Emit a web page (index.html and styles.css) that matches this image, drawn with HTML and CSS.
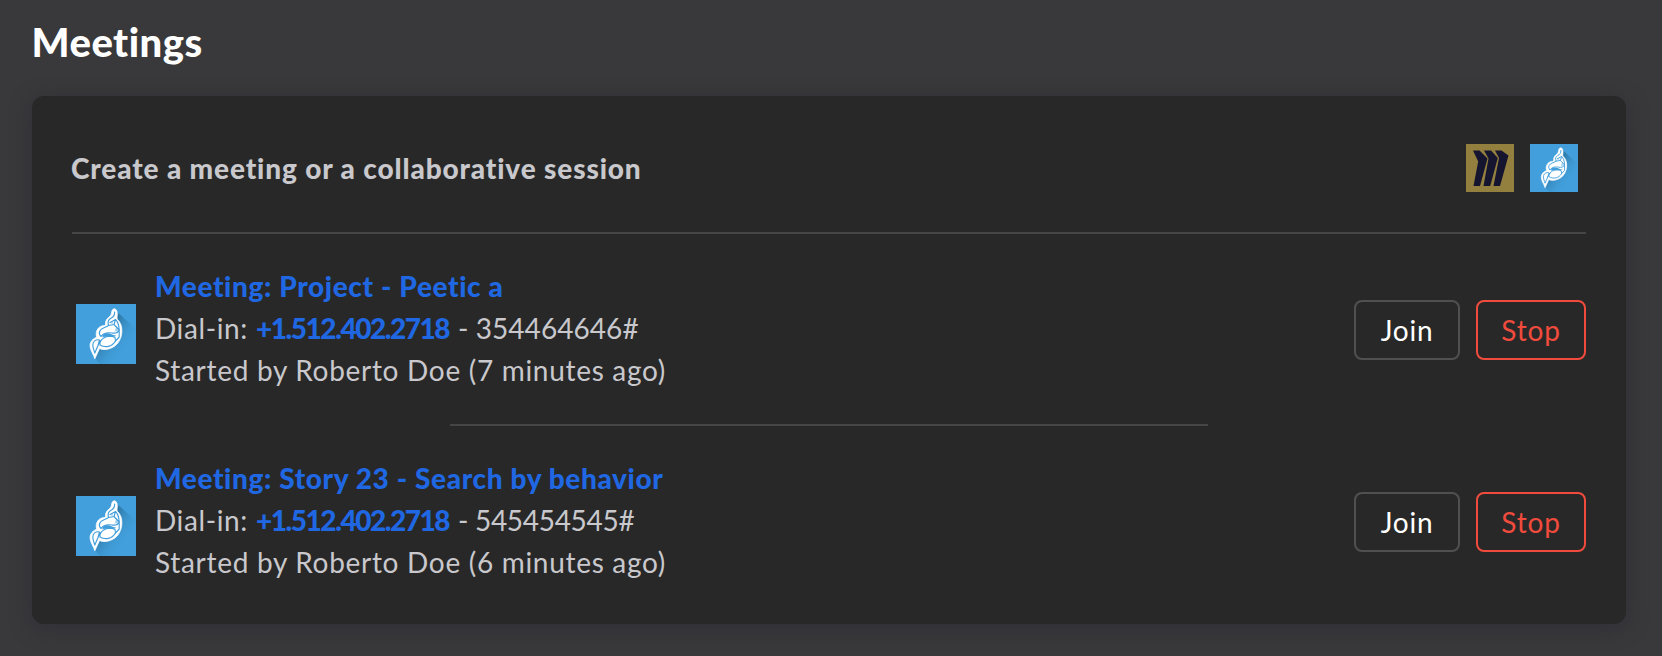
FILE: index.html
```html
<!DOCTYPE html>
<html lang="en">
<head>
<meta charset="utf-8">
<title>Meetings</title>
<link rel="stylesheet" href="styles.css">
</head>
<body>
<svg class="defs" aria-hidden="true">
  <defs>
    <linearGradient id="shade" x1="0.4" y1="0.3" x2="0.8" y2="0.7">
      <stop offset="0" stop-color="#2f7cab"/>
      <stop offset="1" stop-color="#429eda" stop-opacity="0"/>
    </linearGradient>
  </defs>
  <symbol id="jitsi" viewBox="0 0 60 60">
    <rect width="60" height="60" fill="#429fdb"/>
    <path d="M40 7L60 25V60H24L19 54Z" fill="url(#shade)"/>
    <path d="M38.500 4.800C40.500 5 41.500 8 41.300 10.500C41.200 12.500 40.500 14 41.500 15.500C44 18 45.500 21 45.800 25C46.200 30 45 35 41.500 39.500C38 43.500 33 45.500 28 45.500C26 45.500 24.500 45 23.500 44.500C22 48 20.500 51 18.800 54.800C18 51 15 47.500 14.300 43.500C13.500 39.500 15 35.500 20.800 33.200C19.500 30.500 20.200 26.500 22.500 24C24.500 22 27 21.500 29.500 21.500C29.200 18.500 29.800 15.500 32.500 13.500C34.500 12 35.500 10.500 35.700 8C36 6 37 4.800 38.500 4.800Z" fill="#fff" stroke="#fff" stroke-width=".8"/>
    <g fill="none" stroke="#429fdb" stroke-width="1.150" stroke-linecap="round" stroke-linejoin="round">
      <path d="M38.700 8C38.500 12 37.500 13 34.500 14.500C32 16 31.500 18 32.500 21.500L38 20.500L39.500 15.500L34 18.500M39.500 15.500C42 18 43 21 43.200 26L38 20.500"/>
      <path d="M32.500 21.500C29 24 25.500 23.500 23.800 27C23 29 23.500 31 25 32.500C28 28 33 28.500 36 29C39 29.500 42 29 43.200 26V33L39.500 37"/>
      <path d="M23.500 36C20 35 17 37 16.800 41C16.800 44 18 46 18.800 49L22 41.500ZM22 41.500L25 36.500"/>
      <path d="M24 37.500C27 33 33 30.500 39 33.500L39.500 37C36 43 29 44 24 41Z"/>
    </g>
    <path d="M26.500 31C29 28.500 33 29 36 30.500C38 31.500 40 32 41.500 31.500C36 34 31 32 26.500 33.500Z" fill="#429fdb"/>
    <path d="M34 19L37 17.500L36.500 20Z M40.500 22L42.500 27L38.500 27.500Z" fill="#429fdb" opacity=".45"/>
  </symbol>
</svg>
<main class="page">
  <h1 class="page-title">Meetings</h1>
  <section class="card">
    <header class="card-header">
      <h2 class="card-title">Create a meeting or a collaborative session</h2>
      <div class="providers">
        <svg class="provider" viewBox="0 0 48 48" role="img" aria-label="Miro">
          <rect width="48" height="48" fill="#937f3e"/>
          <path d="M7 6.500H13.500L21.500 14.500L14 42H7.500L12.200 17.500ZM18 6.500H25L31.800 14L24.200 42H17.500L22.500 14.500ZM29 6.500H35.500L42.500 11.500L34 42H27.500L33 14Z" fill="#15152f"/>
        </svg>
        <svg class="provider" role="img" aria-label="Jitsi"><use href="#jitsi"/></svg>
      </div>
    </header>
    <ul class="meetings">
      <li class="meeting">
        <svg class="meeting-icon" aria-hidden="true"><use href="#jitsi"/></svg>
        <div class="details">
          <a class="link name">Meeting: Project - Peetic a</a>
          <div class="dial"><span class="label">Dial-in:</span><a class="link phone">+1.512.402.2718</a><span>- 354464646#</span></div>
          <div class="started">Started by Roberto Doe (7 minutes ago)</div>
        </div>
        <div class="actions"><button class="btn join">Join</button><button class="btn stop">Stop</button></div>
      </li>
      <li class="meeting">
        <svg class="meeting-icon" aria-hidden="true"><use href="#jitsi"/></svg>
        <div class="details">
          <a class="link name">Meeting: Story 23 - Search by behavior</a>
          <div class="dial"><span class="label">Dial-in:</span><a class="link phone">+1.512.402.2718</a><span class="pin-narrow">- 545454545#</span></div>
          <div class="started">Started by Roberto Doe (6 minutes ago)</div>
        </div>
        <div class="actions"><button class="btn join">Join</button><button class="btn stop">Stop</button></div>
      </li>
    </ul>
  </section>
</main>
</body>
</html>
```
FILE: styles.css
```css
* { box-sizing: border-box; }
body { margin: 0; background: #39393b; color: #c9c8cd; font: 28px/42px Lato, "Liberation Sans", sans-serif; font-variant-ligatures: none; }
.defs { position: absolute; width: 0; height: 0; }
.page { padding: 16px 36px 32px 32px; }
.page-title { margin: 0 0 28px; color: #fff; font-size: 40px; line-height: 52px; font-weight: 900; letter-spacing: .5px; text-indent: -.5px; }
.card { height: 528px; padding: 0 40px; border-radius: 12px; background: #282828; box-shadow: 0 4px 20px rgba(40, 38, 52, .55); }
.card-header { display: flex; align-items: center; justify-content: space-between; height: 138px; padding: 8px 8px 0 0; border-bottom: 2px solid #464646; }
.card-title { margin: 0 0 0 -1px; font-size: 28px; font-weight: 900; letter-spacing: .86px; }
.providers { display: flex; gap: 16px; }
.provider { width: 48px; height: 48px; }
.meetings { margin: 0; padding: 0; list-style: none; }
.meeting { position: relative; display: flex; align-items: center; height: 192px; padding-left: 4px; }
.meeting + .meeting::before { content: ""; position: absolute; left: calc(25% - 1px); top: -2px; width: calc(50% + 1px); height: 2px; background: #464646; }
.meeting-icon { width: 60px; height: 60px; margin: 8px 20px 0 0; }
.details { flex: 1; margin: -4px 0 0 -1px; white-space: nowrap; }
.link { color: #2068e3; font-weight: 900; }
.name { display: block; letter-spacing: .62px; }
.dial { display: flex; letter-spacing: .06px; }
.label { width: 101px; letter-spacing: .6px; }
.phone { width: 202px; letter-spacing: -1.45px; }
.pin-narrow { letter-spacing: -.3px; }
.started { letter-spacing: .7px; }
.actions { display: flex; gap: 16px; }
.btn { height: 60px; padding: 0; border: 2px solid #505050; border-radius: 8px; background: transparent; color: #fff; font: inherit; letter-spacing: .8px; }
.join { width: 106px; }
.stop { width: 110px; border-color: #f04b3c; color: #f04b3c; }
```
